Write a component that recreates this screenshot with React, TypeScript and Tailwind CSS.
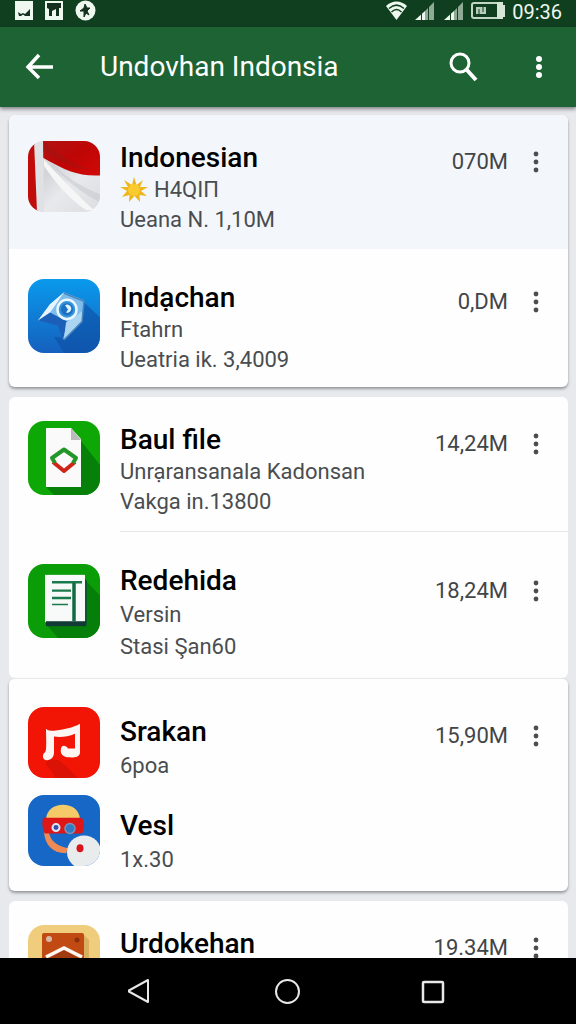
import type { ReactNode } from "react";
import clsx from "clsx";

interface AppItem {
  name: string;
  lines: string[];
  size?: string;
  starred?: boolean;
  icon: ReactNode;
  rowClass: string;
  iconClass: string;
  textClass?: string;
  sizeClass?: string;
}

function FlagIcon() {
  return (
    <svg viewBox="0 0 72 72" preserveAspectRatio="none" className="size-full">
      <defs>
        <linearGradient id="flagWhite" x1="0" y1="0" x2="1" y2="1">
          <stop offset="0%" stopColor="#f2f2f4" />
          <stop offset="35%" stopColor="#d3d4d8" />
          <stop offset="60%" stopColor="#e8e9ec" />
          <stop offset="100%" stopColor="#dcdde1" />
        </linearGradient>
        <linearGradient id="flagRed" x1="0" y1="0" x2="1" y2="1">
          <stop offset="0%" stopColor="#b01312" />
          <stop offset="50%" stopColor="#bf0505" />
          <stop offset="100%" stopColor="#d10a08" />
        </linearGradient>
      </defs>
      <rect width="72" height="72" fill="url(#flagWhite)" />
      <path d="M15 0H72V35C50 36 38 30 15 17Z" fill="url(#flagRed)" />
      <path d="M16 1C30 12 44 24 62 29C44 28 28 19 16 10Z" fill="#a01414" opacity=".5" />
      <path d="M16 19C28 32 42 48 66 70H58C40 58 26 40 16 25Z" fill="#f6f6f7" />
      <path d="M22 22C36 38 52 52 72 62V54C52 46 38 36 22 22Z" fill="#c4c6cb" opacity=".5" />
      <path d="M0 0H7L10 72H0Z" fill="#c00d0b" />
      <path d="M6 0H15L16 72H9Z" fill="#dfe1e5" />
      <path d="M0 0H6L3 4L0 10Z" fill="#8f1110" />
    </svg>
  );
}

function BlueIcon() {
  return (
    <svg viewBox="0 0 72 73" preserveAspectRatio="none" className="size-full">
      <defs>
        <linearGradient id="blueBg" x1="0" y1="0" x2="0" y2="1">
          <stop offset="0%" stopColor="#0a9aec" />
          <stop offset="100%" stopColor="#1560bd" />
        </linearGradient>
      </defs>
      <rect width="72" height="73" fill="url(#blueBg)" />
      <path d="M56 23L72 38V73H36L26 57L34 58Z" fill="#0d4fa3" opacity=".6" />
      <path d="M36 13L56 21L54 42L35 60L33 45L10 41L22 25Z" fill="#7dbcec" />
      <path d="M36 13L22 25L10 41L20 36L30 22Z" fill="#e6f5fd" />
      <path d="M10 41L22 33L39 42L35 60L30 46Z" fill="#1b5fb8" />
      <path d="M38 43L54 32V42L36 60Z" fill="#a9d5f3" />
      <path d="M36 14L56 22L54 42L36 60" fill="none" stroke="#4a86bd" strokeWidth="1.5" />
      <circle cx="39" cy="30" r="9.5" fill="#3593da" stroke="#eaf7ff" strokeWidth="2.5" />
      <circle cx="39" cy="30" r="6" fill="#1c6fc2" />
      <path d="M37 26A4 4 0 1 1 38 33L40 30Z" fill="#d9f2ff" />
    </svg>
  );
}

function FileIcon() {
  return (
    <svg viewBox="0 0 72 74" preserveAspectRatio="none" className="size-full">
      <rect width="72" height="74" fill="#0da805" />
      <path d="M53 20L72 44V74H26L18 66Z" fill="#068009" />
      <path d="M18 7H43L53 18V66H18Z" fill="#fafafa" />
      <path d="M43 7L53 19H43Z" fill="#b9bcbb" />
      <path d="M25 41L36 50L47 41" fill="none" stroke="#cf2418" strokeWidth="4" strokeLinejoin="round" />
      <path d="M27 42L24 37L36 28.5L48 37L45 42" fill="none" stroke="#24962a" strokeWidth="4" strokeLinejoin="round" />
    </svg>
  );
}

function DocumentIcon() {
  return (
    <svg viewBox="0 0 72 75" preserveAspectRatio="none" className="size-full">
      <rect width="72" height="75" fill="#0b9d08" />
      <path d="M57 16L72 32V75H30L17 60Z" fill="#067f0a" />
      <path d="M57 15L59 17V62H57Z" fill="#0b5a2c" />
      <rect x="17" y="11" width="40" height="48" fill="#f8faf9" />
      <rect x="18" y="58" width="40" height="5" fill="#123b36" />
      <path d="M24 18.5H54M24 27H43M24 34.5H43" stroke="#1b7a4c" strokeWidth="2.5" />
      <path d="M24 41H40" stroke="#1b7a4c" strokeWidth="1.5" />
      <path d="M46 19V58" stroke="#146a45" strokeWidth="3.5" />
    </svg>
  );
}

function MusicIcon() {
  return (
    <svg viewBox="0 0 72 72" preserveAspectRatio="none" className="size-full">
      <rect width="72" height="72" fill="#f21505" />
      <path d="M20 53L31 54L37 59L50 72H28L18 58Z" fill="#d21107" opacity=".7" />
      <path
        d="M18 22C20 24 22 24 26 24C36 23 45 21 52 17V46C52 50 48 52 42 51C34 51 32 47 33 42C34 38 38 39 40 42L47 42V27C40 30 33 31 26 30V46C26 51 23 54 19 54C14 54 14 48 17 46C19 44 18 31 18 22Z"
        fill="#fdf5f3"
      />
    </svg>
  );
}

function MaskIcon() {
  return (
    <svg viewBox="0 0 72 72" preserveAspectRatio="none" className="size-full">
      <rect width="72" height="72" fill="#1767c6" />
      <path d="M18 24C19 15 26 10 35 10C44 10 51 15 52 24Z" fill="#f4cb68" />
      <path d="M16 38C17 50 24 59 38 59L40 54C29 52 22 46 21 38Z" fill="#f08a55" />
      <path d="M15 23H54C57 29 56 35 54 39H17C14 34 14 28 15 23Z" fill="#dd1717" />
      <circle cx="28" cy="33" r="4.5" fill="#dfe6f7" />
      <circle cx="28" cy="33" r="2.5" fill="#3a50a8" />
      <circle cx="42" cy="34" r="5" fill="#2f7cc4" stroke="#7d93bd" strokeWidth="1.5" />
      <circle cx="56" cy="58" r="17" fill="#e9ecec" />
      <ellipse cx="52" cy="54" rx="3.5" ry="4" fill="#d8141c" />
    </svg>
  );
}

function BoxIcon() {
  return (
    <svg viewBox="0 0 72 72" preserveAspectRatio="none" className="size-full">
      <rect width="72" height="72" fill="#f0cd7c" />
      <path d="M56 10L61 15V60H56Z" fill="#d9b05f" />
      <rect x="14" y="8" width="42" height="50" rx="2" fill="#c04a12" />
      <circle cx="21" cy="14" r="3" fill="#d9b8a8" />
      <circle cx="49" cy="15" r="2.5" fill="#8d2f0c" />
      <path d="M20 34L36 25L52 34V50H20Z" fill="#a03a10" />
      <path d="M18 32L36 23L54 32" fill="none" stroke="#fdf8f2" strokeWidth="3.5" />
    </svg>
  );
}

function StarBurst() {
  return (
    <svg viewBox="0 0 28 26" aria-hidden="true" className="h-[26px] w-7">
      <path
        d="M14 0L16.5 8L23 3L20 10L28 10L21 14L27 19L19.500 18L20 25L14.500 19L9 25L9.500 18L2 20L7 14L0 10L8 10L4 3L12 8Z"
        fill="#eeb61c"
      />
      <circle cx="14" cy="13" r="6" fill="#f9cb2e" />
    </svg>
  );
}

function MoreDots({ radius = 2.4 }: { radius?: number }) {
  return (
    <svg viewBox="0 0 8 24" aria-hidden="true" className="h-6 w-2">
      <circle cx="4" cy="4" r={radius} fill="currentColor" />
      <circle cx="4" cy="12" r={radius} fill="currentColor" />
      <circle cx="4" cy="20" r={radius} fill="currentColor" />
    </svg>
  );
}

const groups: { className: string; items: AppItem[] }[] = [
  {
    className: "mb-2.5 shadow-[0_2px_3px_rgba(0,0,0,0.35)]",
    items: [
      {
        name: "Indonesian",
        lines: ["H4QIП", "Ueana N. 1,10M"],
        size: "070M",
        starred: true,
        icon: <FlagIcon />,
        rowClass: "bg-[#f3f7fb] pt-[26px] pb-3.5",
        iconClass: "h-[71px]",
      },
      {
        name: "Indạchan",
        lines: ["Ftahrn", "Ueatria ik. 3,4009"],
        size: "0,DM",
        icon: <BlueIcon />,
        rowClass: "pt-8 pb-3",
        iconClass: "-mt-0.5 h-[74px]",
      },
    ],
  },
  {
    className: "",
    items: [
      {
        name: "Baul file",
        lines: ["Unrạransanala Kadonsan", "Vakga in.13800"],
        size: "14,24M",
        icon: <FileIcon />,
        rowClass: "pt-6",
        iconClass: "h-[74px]",
        textClass: "border-b border-[#e6e7e9] pt-0.5 pb-3.5",
      },
      {
        name: "Redehida",
        lines: ["Versin", "Stasi Şan60"],
        size: "18,24M",
        icon: <DocumentIcon />,
        rowClass: "pt-8 pb-4",
        iconClass: "h-[74px]",
        textClass: "gap-0.5",
        sizeClass: "mt-2",
      },
    ],
  },
  {
    className: "mb-2.5 border-t border-[#e6e7e9] shadow-[0_2px_3px_rgba(0,0,0,0.35)]",
    items: [
      {
        name: "Srakan",
        lines: ["6poa"],
        size: "15,90M",
        icon: <MusicIcon />,
        rowClass: "pt-7",
        iconClass: "h-[71px]",
        textClass: "gap-0.5 pt-2",
      },
      {
        name: "Vesl",
        lines: ["1x.30"],
        icon: <MaskIcon />,
        rowClass: "pt-3.5 pb-4",
        iconClass: "h-[71px]",
        textClass: "gap-0.5 pt-3.5",
      },
    ],
  },
  {
    className: "",
    items: [
      {
        name: "Urdokehan",
        lines: [],
        size: "19.34M",
        icon: <BoxIcon />,
        rowClass: "pt-6 pb-6",
        iconClass: "h-[72px]",
        textClass: "pt-0.5",
      },
    ],
  },
];

function StatusBar() {
  return (
    <div className="flex h-[27px] shrink-0 items-start bg-[#103f20] pr-3.5 pl-[15px] text-[#eef8ee]">
      <svg viewBox="0 0 82 22" aria-hidden="true" className="h-[22px] w-[82px]">
        <rect x="0" y="1" width="18" height="19" fill="currentColor" />
        <path d="M3 12L6 14L8 13L10 14L15 9V16H10L8 14.500L6 16H4Z" fill="#15301e" />
        <rect x="30" y="1" width="18" height="19" fill="currentColor" />
        <path d="M32 3H46V8H44V16H41V9L37 11V16H34V9L32 8Z" fill="#15301e" />
        <circle cx="70.5" cy="10.5" r="10" fill="currentColor" />
        <path d="M70 4L72 8L75 8L72 11L74 15L71 13L69 17L69 11L65 11L69 8Z" fill="#15301e" stroke="#15301e" />
      </svg>
      <svg viewBox="0 0 122 22" aria-hidden="true" className="ml-auto h-[22px] w-[122px]">
        <path d="M0 6C6 0 15 0 21 6L10.5 20Z" fill="currentColor" />
        <path d="M3 8.5C8 4 13 4 18 8.5M5.5 12C9 8.5 12 8.5 15.5 12" fill="none" stroke="#103f20" strokeWidth="1.5" />
        <path d="M29 20L39 11V20Z" fill="currentColor" />
        <path d="M39 11L48 2V20H39Z" fill="#8fab95" />
        <path d="M58 20L68 11V20Z" fill="currentColor" />
        <path d="M68 11L77 2V20H68Z" fill="#8fab95" />
        <path d="M35.500 13V20M42.500 7V20M64.500 13V20M71.500 7V20" stroke="#103f20" />
        <rect x="86" y="3" width="28" height="15" rx="2" fill="none" stroke="#c3d6c6" strokeWidth="2" />
        <path d="M111 2H117V5H119V17H117V19H111Z" fill="#d7e5d9" />
        <path d="M90 7H100V14H90Z" fill="#b9cdbc" />
        <path d="M93 9V14M97 7V12" stroke="#103f20" />
      </svg>
      <span className="ml-1 text-[20px] leading-6">09:36</span>
    </div>
  );
}

function AppBar() {
  return (
    <header className="z-10 flex h-20 shrink-0 items-center bg-[#1d6333] pr-[33px] pl-6 text-white shadow-[0_2px_4px_rgba(0,0,0,0.45)]">
      <button type="button" aria-label="Back">
        <svg viewBox="0 0 32 32" className="size-8">
          <path d="M15 4L4 16L15 27M4 16H29" fill="none" stroke="currentColor" strokeWidth="3.5" />
        </svg>
      </button>
      <h1 className="ml-11 flex-1 text-[28px] leading-9">Undovhan Indonsia</h1>
      <button type="button" aria-label="Search">
        <svg viewBox="0 0 32 32" className="size-8">
          <circle cx="13" cy="12" r="9" fill="none" stroke="currentColor" strokeWidth="3" />
          <path d="M19 18L29 29" stroke="currentColor" strokeWidth="4" />
        </svg>
      </button>
      <button type="button" aria-label="More options" className="ml-14">
        <MoreDots radius={3} />
      </button>
    </header>
  );
}

function AppRow({ item }: { item: AppItem }) {
  return (
    <li className={clsx("flex items-start pl-[19px]", item.rowClass)}>
      <div className={clsx("w-[72px] shrink-0 overflow-hidden rounded-2xl", item.iconClass)}>{item.icon}</div>
      <div className={clsx("ml-5 flex min-w-0 flex-1 flex-col", item.textClass)}>
        <div className="flex h-[34px] items-start">
          <h2 className="flex-1 text-[28px] leading-[34px] font-medium text-black">{item.name}</h2>
          {item.size && (
            <div className={clsx("flex h-[38px] items-center pr-7", item.sizeClass ?? "mt-0.5")}>
              <span className="text-[22px] leading-7 text-[#424548]">{item.size}</span>
              <button type="button" aria-label={`Options for ${item.name}`} className="ml-6 text-[#4b4e50]">
                <MoreDots />
              </button>
            </div>
          )}
        </div>
        {item.lines.map((line, i) => (
          <p key={line} className="flex items-center gap-1.5 text-[22px] leading-[30px] text-[#4a4d50]">
            {i === 0 && item.starred && <StarBurst />}
            {line}
          </p>
        ))}
      </div>
    </li>
  );
}

function NavBar() {
  return (
    <nav className="flex h-[66px] shrink-0 items-center justify-center gap-[118px] bg-black text-[#e8e8e8]">
      <button type="button" aria-label="Back">
        <svg viewBox="0 0 28 28" className="size-7">
          <path d="M-1 14L19 3V25Z" fill="none" stroke="currentColor" strokeWidth="2" strokeLinejoin="round" overflow="visible" transform="translate(1 0)" />
        </svg>
      </button>
      <button type="button" aria-label="Home">
        <svg viewBox="0 0 28 28" className="size-7">
          <circle cx="13.500" cy="14.500" r="11.500" fill="none" stroke="currentColor" strokeWidth="2" />
        </svg>
      </button>
      <button type="button" aria-label="Recent apps">
        <svg viewBox="0 0 28 28" className="size-7">
          <rect x="3" y="5" width="20" height="20" rx="1" fill="none" stroke="currentColor" strokeWidth="2.5" />
        </svg>
      </button>
    </nav>
  );
}

export default function App() {
  return (
    <div className="flex h-dvh flex-col overflow-hidden bg-[#e7e9ed] font-[Roboto,sans-serif]">
      <StatusBar />
      <AppBar />
      <main className="min-h-0 flex-1 overflow-hidden px-2 pt-2">
        {groups.map((group) => (
          <ul
            key={group.items[0].name}
            className={clsx("ml-px overflow-hidden rounded-md bg-[#fefefe]", group.className)}
          >
            {group.items.map((item) => (
              <AppRow key={item.name} item={item} />
            ))}
          </ul>
        ))}
      </main>
      <NavBar />
    </div>
  );
}
